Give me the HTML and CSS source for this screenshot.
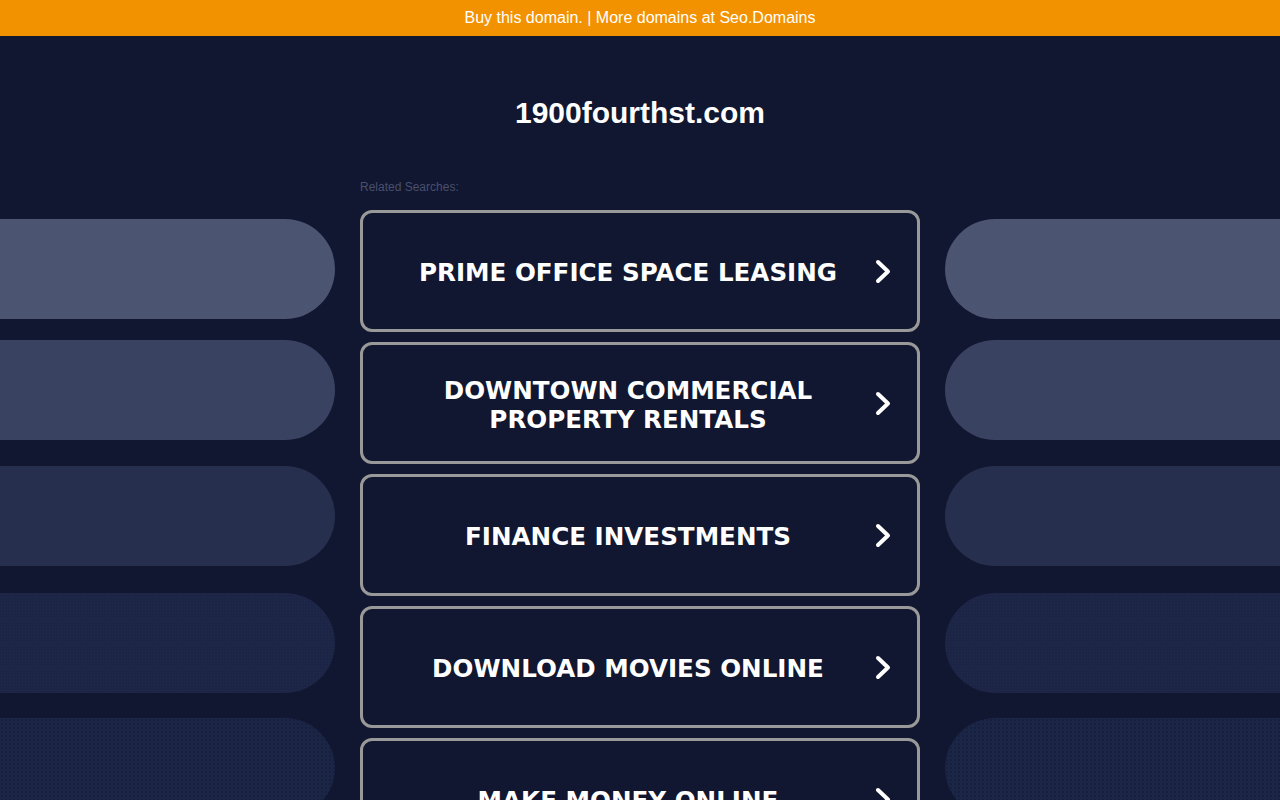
FILE: index.html
```html
<!DOCTYPE html>
<html lang="en">
<head>
<meta charset="utf-8">
<title>1900fourthst.com</title>
<link rel="stylesheet" href="styles.css">
</head>
<body>
<div class="topbar"><a class="topbar-link" href="#">Buy this domain.</a> | <a class="topbar-link" href="#">More domains at Seo.Domains</a></div>
<h1 class="title">1900fourthst.com</h1>
<div class="layout">
  <div class="side side-left">
    <div class="pill pill-1"></div>
    <div class="pill pill-2"></div>
    <div class="pill pill-3"></div>
    <div class="pill pill-4"></div>
    <div class="pill pill-5"></div>
  </div>
  <div class="center">
    <div class="related">Related Searches:</div>
    <div class="list">
      <a class="item" href="#"><span class="item-text">PRIME OFFICE SPACE LEASING</span><svg class="chev" viewBox="0 0 16 25"><polyline points="3,3 13,12.5 3,22"/></svg></a>
      <a class="item" href="#"><span class="item-text">DOWNTOWN COMMERCIAL PROPERTY RENTALS</span><svg class="chev" viewBox="0 0 16 25"><polyline points="3,3 13,12.5 3,22"/></svg></a>
      <a class="item" href="#"><span class="item-text">FINANCE INVESTMENTS</span><svg class="chev" viewBox="0 0 16 25"><polyline points="3,3 13,12.5 3,22"/></svg></a>
      <a class="item" href="#"><span class="item-text">DOWNLOAD MOVIES ONLINE</span><svg class="chev" viewBox="0 0 16 25"><polyline points="3,3 13,12.5 3,22"/></svg></a>
      <a class="item" href="#"><span class="item-text">MAKE MONEY ONLINE</span><svg class="chev" viewBox="0 0 16 25"><polyline points="3,3 13,12.5 3,22"/></svg></a>
    </div>
  </div>
  <div class="side side-right">
    <div class="pill pill-1"></div>
    <div class="pill pill-2"></div>
    <div class="pill pill-3"></div>
    <div class="pill pill-4"></div>
    <div class="pill pill-5"></div>
  </div>
</div>
</body>
</html>
```
FILE: styles.css
```css
html, body {
  margin: 0;
  padding: 0;
  height: 100%;
  overflow: hidden;
}
body {
  background: #111730;
  font-family: "Liberation Sans", Arial, sans-serif;
}
.topbar {
  height: 36px;
  background: #f39200;
  color: #ffffff;
  font-size: 16px;
  line-height: 36px;
  text-align: center;
}
.topbar-link {
  color: #ffffff;
  text-decoration: none;
}
.title {
  margin: 60px 0 0;
  height: 32px;
  font-size: 30px;
  line-height: 33px;
  font-weight: bold;
  color: #ffffff;
  text-align: center;
}
.layout {
  display: grid;
  grid-template-columns: 1fr 560px 1fr;
  column-gap: 25px;
  margin-top: 42px;
}
.side {
  display: flex;
  flex-direction: column;
  padding-top: 49px;
}
.pill {
  height: 100px;
  flex: none;
}
.side-left .pill {
  border-radius: 0 50px 50px 0;
}
.side-right .pill {
  border-radius: 50px 0 0 50px;
}
.pill-1 { background: #4b5572; }
.pill-2 { background: #3a4261; margin-top: 21px; }
.pill-3 { background: #262f4e; margin-top: 26px; }
.pill-4 {
  background-color: #1c2545;
  background-image: radial-gradient(circle, rgba(50, 62, 100, 0.25) 0.6px, transparent 0.9px);
  background-size: 3px 3px;
  margin-top: 27px;
}
.pill-5 {
  background-color: #1b2546;
  background-image: radial-gradient(circle, rgba(10, 16, 36, 0.4) 0.6px, transparent 0.9px);
  background-size: 4px 4px;
  margin-top: 25px;
}
.related {
  margin-top: 10px;
  height: 14px;
  font-size: 12px;
  line-height: 14px;
  color: #48506e;
}
.list {
  display: flex;
  flex-direction: column;
  gap: 10px;
  margin-top: 16px;
}
.item {
  box-sizing: border-box;
  height: 122px;
  border: 3px solid #999999;
  border-radius: 12px;
  display: flex;
  align-items: center;
  padding: 0 26px 0 30px;
  text-decoration: none;
  color: #ffffff;
}
.item-text {
  flex: 1;
  text-align: center;
  font-family: "DejaVu Sans", Verdana, sans-serif;
  font-weight: bold;
  font-size: 24.6px;
  line-height: 29px;
  padding-top: 3px;
}
.chev {
  flex: none;
  width: 16px;
  height: 25px;
  margin-left: 12px;
}
.chev polyline {
  fill: none;
  stroke: #ffffff;
  stroke-width: 4;
  stroke-linecap: round;
  stroke-linejoin: round;
}
```
